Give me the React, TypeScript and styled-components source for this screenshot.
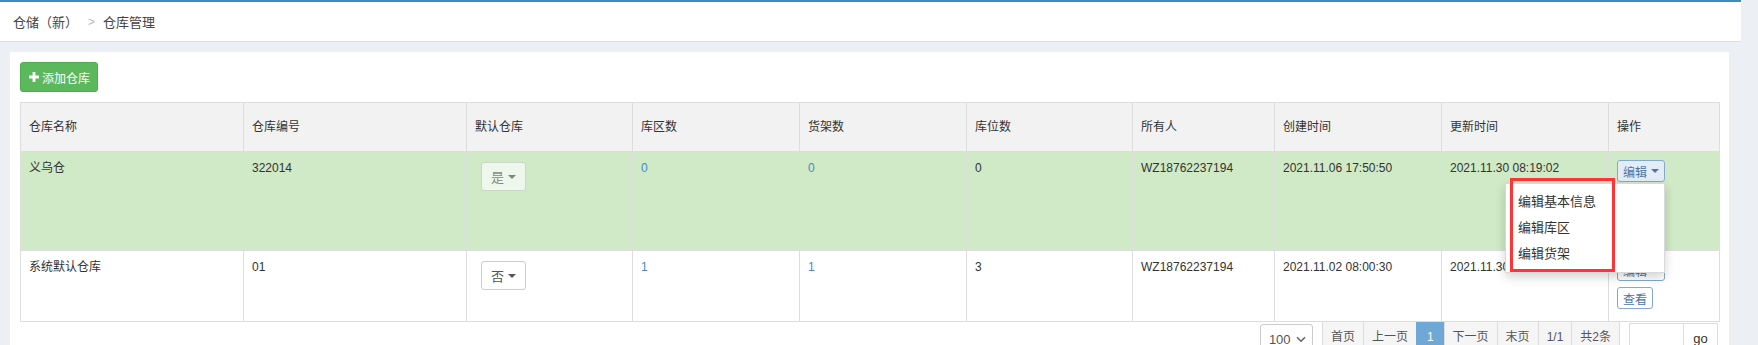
import React from 'react';
import styled, { createGlobalStyle } from 'styled-components';

interface Warehouse {
  name: string;
  code: string;
  isDefault: boolean;
  zones: number;
  shelves: number;
  slots: number;
  owner: string;
  createdAt: string;
  updatedAt: string;
  canDelete: boolean;
}

const warehouses: Warehouse[] = [
  {
    name: '义乌仓',
    code: '322014',
    isDefault: true,
    zones: 0,
    shelves: 0,
    slots: 0,
    owner: 'WZ18762237194',
    createdAt: '2021.11.06 17:50:50',
    updatedAt: '2021.11.30 08:19:02',
    canDelete: true,
  },
  {
    name: '系统默认仓库',
    code: '01',
    isDefault: false,
    zones: 1,
    shelves: 1,
    slots: 3,
    owner: 'WZ18762237194',
    createdAt: '2021.11.02 08:00:30',
    updatedAt: '2021.11.30 08:19:02',
    canDelete: false,
  },
];

const columns = [
  { title: '仓库名称', width: 223 },
  { title: '仓库编号', width: 223 },
  { title: '默认仓库', width: 166 },
  { title: '库区数', width: 167 },
  { title: '货架数', width: 167 },
  { title: '库位数', width: 166 },
  { title: '所有人', width: 142 },
  { title: '创建时间', width: 167 },
  { title: '更新时间', width: 167 },
  { title: '操作', width: 111 },
];

const pages = ['首页', '上一页', '1', '下一页', '末页', '1/1', '共2条'];

const PlusIcon = () => (
  <svg width="10" height="10" viewBox="0 0 10 10">
    <path d="M3.6 0h2.8v3.6H10v2.8H6.4V10H3.6V6.4H0V3.6h3.6z" fill="#fff" />
  </svg>
);

const ChevronDown = () => (
  <svg width="10" height="7" viewBox="0 0 10 7">
    <path d="M1 1.2l4 4 4-4" fill="none" stroke="#666" strokeWidth="1.6" />
  </svg>
);

const App: React.FC = () => {
  return (
    <>
      <GlobalStyle />
      <Page>
        <Header>
          <Crumb>仓储（新）</Crumb>
          <CrumbSep>&gt;</CrumbSep>
          <Crumb>仓库管理</Crumb>
        </Header>

        <Content>
          <Panel>
            <Toolbar>
              <AddButton>
                <PlusIcon />
                添加仓库
              </AddButton>
            </Toolbar>

            <Table>
              <colgroup>
                {columns.map((c) => (
                  <Col key={c.title} $w={c.width} />
                ))}
              </colgroup>
              <thead>
                <tr>
                  {columns.map((c) => (
                    <Th key={c.title}>{c.title}</Th>
                  ))}
                </tr>
              </thead>
              <tbody>
                {warehouses.map((w, i) => (
                  <Row key={w.code} $active={i === 0}>
                    <Td>{w.name}</Td>
                    <Td>{w.code}</Td>
                    <Td>
                      <DefaultSelect disabled={w.isDefault} $disabled={w.isDefault}>
                        {w.isDefault ? '是' : '否'}
                        <Caret />
                      </DefaultSelect>
                    </Td>
                    <Td><LinkNum>{w.zones}</LinkNum></Td>
                    <Td><LinkNum>{w.shelves}</LinkNum></Td>
                    <Td>{w.slots}</Td>
                    <Td>{w.owner}</Td>
                    <Td>{w.createdAt}</Td>
                    <Td>{w.updatedAt}</Td>
                    <ActionTd>
                      <Actions>
                        <DropWrap>
                          <ActionButton $open={i === 0}>
                            编辑
                            <Caret />
                          </ActionButton>
                          {i === 0 && (
                            <DropMenu>
                              <MenuItem>编辑基本信息</MenuItem>
                              <MenuItem>编辑库区</MenuItem>
                              <MenuItem>编辑货架</MenuItem>
                              <Highlight />
                            </DropMenu>
                          )}
                        </DropWrap>
                        <ActionButton>查看</ActionButton>
                        {w.canDelete && <ActionButton $danger>删除</ActionButton>}
                      </Actions>
                    </ActionTd>
                  </Row>
                ))}
              </tbody>
            </Table>

            <Footer>
              <SizeSelect>
                100
                <ChevronDown />
              </SizeSelect>
              <Pager>
                {pages.map((p) => (
                  <PageItem key={p} $active={p === '1'}>{p}</PageItem>
                ))}
              </Pager>
              <GoGroup>
                <GoInput />
                <GoButton>go</GoButton>
              </GoGroup>
            </Footer>
          </Panel>
        </Content>
      </Page>
    </>
  );
};

const GlobalStyle = createGlobalStyle`
  html, body {
    margin: 0;
    padding: 0;
    background: #ecf0f5;
    overflow: hidden;
  }
  body {
    font-family: 'Liberation Sans', 'Noto Sans CJK SC', sans-serif;
    font-size: 12px;
    color: #333;
  }
`;

const Page = styled.div`
  margin-right: 17px;
`;

const Header = styled.div`
  height: 39px;
  background: #fff;
  border-top: 2px solid #3c8dbc;
  border-bottom: 1px solid #dcdcdc;
  display: flex;
  align-items: center;
  padding-left: 13px;
  font-size: 13px;
`;

const Crumb = styled.span`
  color: #444;
`;

const CrumbSep = styled.span`
  color: #b8b8b8;
  margin: 0 8px 0 10px;
  font-size: 12px;
`;

const Content = styled.div`
  padding: 10px 12px 0 10px;
`;

const Panel = styled.div`
  background: #fff;
  padding: 10px;
  min-height: 400px;
`;

const Toolbar = styled.div`
  display: flex;
  margin-bottom: 10px;
`;

const AddButton = styled.button`
  display: flex;
  align-items: center;
  gap: 3px;
  height: 30px;
  padding: 0 7px 0 8px;
  font-family: inherit;
  font-size: 12px;
  color: #fff;
  background: #5cb85c;
  border: 1px solid #4cae4c;
  border-radius: 3px;
`;

const Table = styled.table`
  width: 100%;
  table-layout: fixed;
  border-collapse: collapse;
  border: 1px solid #ddd;
`;

const Col = styled.col<{ $w: number }>`
  width: ${({ $w }) => $w}px;
`;

const Th = styled.th`
  text-align: left;
  font-weight: normal;
  background: #f2f2f2;
  border: 1px solid #ddd;
  padding: 15px 8px 14px;
  line-height: 19px;
  color: #333;
`;

const Row = styled.tr<{ $active?: boolean }>`
  background: ${({ $active }) => ($active ? '#d0e9c6' : '#fff')};
`;

const Td = styled.td`
  border: 1px solid #ddd;
  padding: 8px 8px;
  line-height: 17px;
  vertical-align: top;
  color: #333;
`;

const ActionTd = styled(Td)`
  padding-bottom: 12px;
`;

const LinkNum = styled.span`
  color: #428bca;
`;

const Caret = styled.span`
  display: inline-block;
  width: 0;
  height: 0;
  margin-left: 4px;
  border-top: 4px solid currentColor;
  border-left: 4px solid transparent;
  border-right: 4px solid transparent;
  vertical-align: middle;
`;

const DefaultSelect = styled.button<{ $disabled?: boolean }>`
  display: inline-flex;
  align-items: center;
  height: 29px;
  margin: 2px 0 0 6px;
  padding: 0 9px;
  font-family: inherit;
  font-size: 13px;
  color: #555;
  background: #fff;
  border: 1px solid #ccc;
  border-radius: 3px;
  opacity: ${({ $disabled }) => ($disabled ? 0.65 : 1)};
`;

const Actions = styled.div`
  display: flex;
  flex-direction: column;
  align-items: flex-start;
  gap: 6px;
`;

const DropWrap = styled.div`
  position: relative;
`;

const ActionButton = styled.button<{ $open?: boolean; $danger?: boolean }>`
  display: inline-flex;
  align-items: center;
  height: 22px;
  padding: 0 5px;
  font-family: inherit;
  font-size: 12px;
  color: ${({ $danger }) => ($danger ? '#c9302c' : '#4a76a8')};
  background: ${({ $open }) => ($open ? '#e4edf7' : '#fff')};
  border: 1px solid ${({ $danger }) => ($danger ? '#e8a3a1' : '#84a9cf')};
  border-radius: 3px;
`;

const DropMenu = styled.ul`
  position: absolute;
  top: 100%;
  right: 0;
  margin: 1px 0 0;
  padding: 5px 0;
  width: 160px;
  list-style: none;
  background: #fff;
  border: 1px solid rgba(0, 0, 0, 0.15);
  box-shadow: 0 4px 10px rgba(0, 0, 0, 0.175);
  z-index: 10;
  box-sizing: border-box;
`;

const MenuItem = styled.li`
  padding: 0 12px;
  line-height: 26px;
  font-size: 13px;
  color: #333;
  white-space: nowrap;
`;

const Highlight = styled.div`
  position: absolute;
  left: 4px;
  top: -6px;
  width: 105px;
  height: 94px;
  border: 3px solid #ff3535;
  box-sizing: border-box;
  pointer-events: none;
`;

const Footer = styled.div`
  display: flex;
  justify-content: flex-end;
  align-items: flex-start;
  padding-right: 1px;
`;

const SizeSelect = styled.div`
  display: flex;
  align-items: center;
  justify-content: space-between;
  box-sizing: border-box;
  width: 53px;
  height: 30px;
  margin-top: 2px;
  padding: 0 6px 0 8px;
  font-size: 13px;
  color: #555;
  border: 1px solid #ccc;
  border-radius: 3px;
`;

const Pager = styled.ul`
  display: flex;
  margin: 0 9px 0 10px;
  padding: 0;
  list-style: none;
`;

const PageItem = styled.li<{ $active?: boolean }>`
  height: 30px;
  line-height: 30px;
  padding: 0 ${({ $active }) => ($active ? 10 : 8)}px;
  font-size: 12px;
  color: ${({ $active }) => ($active ? '#fff' : '#555')};
  background: ${({ $active }) => ($active ? '#6fa8d6' : '#f5f5f5')};
  border: 1px solid ${({ $active }) => ($active ? '#6fa8d6' : '#ddd')};
  border-top: none;
  margin-left: -1px;
`;

const GoGroup = styled.div`
  display: flex;
  margin-top: 1px;
`;

const GoInput = styled.div`
  width: 55px;
  height: 30px;
  box-sizing: border-box;
  border: 1px solid #ddd;
`;

const GoButton = styled.div`
  width: 34px;
  height: 30px;
  line-height: 30px;
  box-sizing: border-box;
  text-align: center;
  font-size: 13px;
  color: #333;
  border: 1px solid #ddd;
  border-left: none;
`;

export default App;
